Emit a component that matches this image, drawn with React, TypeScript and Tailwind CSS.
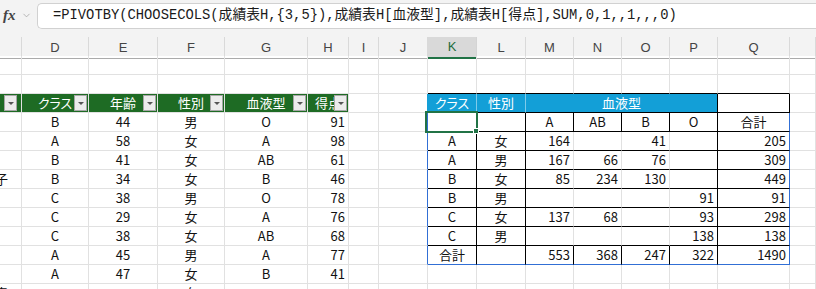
import React from 'react';
import clsx from 'clsx';
import { ChevronDown } from 'lucide-react';

// Spreadsheet columns C..R, widths taken from the screenshot
const GRID =
  'grid grid-cols-[22px_67px_69px_67px_83px_41px_30px_49px_49px_49px_48px_48px_48px_48px_72px_1fr]';

const GR = 'border-r-[#e1e1e1]';
const GB = 'border-b-[#e1e1e1]';
const KR = 'border-r-black';
const KB = 'border-b-black';
const SR = 'border-r-[#316fd5]';
const SB = 'border-b-[#316fd5]';
const CENTER = 'justify-center';
const RIGHT = 'justify-end pr-[3px]';
const GREEN = 'bg-[#1e6b24] text-white border-r-[#1e6b24]';
const BLUE = 'bg-[#139fd7] text-white';

type Spec = {
  t?: React.ReactNode;
  al?: string;
  bg?: string;
  r?: string;
  b?: string;
  span?: string;
  over?: React.ReactNode;
};

function Cell({ s }: { s: Spec }) {
  return (
    <div
      className={clsx(
        'relative flex h-[19px] items-center whitespace-nowrap border-r border-b',
        s.r ?? GR,
        s.b ?? GB,
        s.al ?? CENTER,
        s.bg,
        s.span,
      )}
    >
      {s.t}
      {s.over}
    </div>
  );
}

// little dropdown button of a table header
function FilterBtn({ right = 'right-[1px]' }: { right?: string }) {
  return (
    <span
      className={clsx(
        'absolute top-[1px] z-10 flex h-[16px] w-[13px] items-center justify-center border border-[#a6a6a6] bg-[#ececec]',
        right,
      )}
    >
      <span className="h-0 w-0 border-x-[3px] border-t-[3px] border-x-transparent border-t-[#555]" />
    </span>
  );
}

// active cell outline + fill handle
const Selected = (
  <>
    <span className="pointer-events-none absolute -left-[3px] -top-[2px] z-10 h-[22px] w-[53px] border-2 border-[#217346]" />
    <span className="absolute left-[45px] top-[15px] z-20 h-[6px] w-[6px] border border-white bg-[#217346]" />
  </>
);

type Row6 = [string, string, string, string, string, string];

const left = (name: string, d: string, e: string, f: string, g: string, h: string): Spec[] => [
  { t: name, al: 'justify-end pr-[13px]' },
  { t: d },
  { t: e },
  { t: f },
  { t: g },
  { t: h, al: RIGHT },
];

const blankLeft = (): Spec[] => [{}, {}, {}, {}, {}, {}];

const data: Row6[] = [
  ['', 'B', '44', '男', 'O', '91'],
  ['', 'A', '58', '女', 'A', '98'],
  ['', 'B', '41', '女', 'AB', '61'],
  ['子', 'B', '34', '女', 'B', '46'],
  ['', 'C', '38', '男', 'O', '78'],
  ['', 'C', '29', '女', 'A', '76'],
  ['', 'C', '38', '女', 'AB', '68'],
  ['', 'A', '45', '男', 'A', '77'],
  ['', 'A', '47', '女', 'B', '41'],
];

const pivot = [
  ['A', '女', '164', '', '41', '', '205'],
  ['A', '男', '167', '66', '76', '', '309'],
  ['B', '女', '85', '234', '130', '', '449'],
  ['B', '男', '', '', '', '91', '91'],
  ['C', '女', '137', '68', '', '93', '298'],
  ['C', '男', '', '', '', '138', '138'],
];

const body: Spec[][] = [];

body.push([...blankLeft(), {}, {}, {}, {}, {}, {}, {}, {}, {}, {}]);
// top edge of the pivot table
body.push([...blankLeft(), {}, {}, { b: KB }, { b: KB }, { b: KB }, { b: KB }, { b: KB }, { b: KB }, { b: KB }, {}]);
// table headers
body.push([
  { bg: GREEN, over: <FilterBtn right="right-[4px]" /> },
  { t: 'クラス', bg: GREEN, over: <FilterBtn /> },
  { t: '年齢', bg: GREEN, over: <FilterBtn /> },
  { t: '性別', bg: GREEN, over: <FilterBtn /> },
  { t: '血液型', bg: GREEN, over: <FilterBtn /> },
  { t: '得点', bg: GREEN, al: 'justify-center overflow-hidden', over: <FilterBtn /> },
  {},
  { r: 'border-r-[#139fd7]' },
  { t: 'クラス', bg: BLUE, r: 'border-r-[#7fcbea]', b: KB },
  { t: '性別', bg: BLUE, r: 'border-r-[#7fcbea]', b: KB },
  { t: '血液型', bg: BLUE, r: KR, b: KB, span: 'col-span-4' },
  { r: KR, b: KB },
  {},
]);

// blood type header of the pivot
body.push([
  ...left(...data[0]),
  {},
  { r: SR },
  { r: KR, b: KB, over: Selected },
  { r: KR, b: KB },
  { t: 'A', r: KR, b: KB },
  { t: 'AB', r: KR, b: KB },
  { t: 'B', r: KR, b: KB },
  { t: 'O', r: KR, b: KB },
  { t: '合計', r: SR, b: KB },
  {},
]);

pivot.forEach((p, i) => {
  body.push([
    ...left(...data[i + 1]),
    {},
    { r: SR },
    { t: p[0], r: KR, b: KB },
    { t: p[1], r: KR, b: KB },
    { t: p[2], al: RIGHT, b: KB },
    { t: p[3], al: RIGHT, b: KB },
    { t: p[4], al: RIGHT, b: KB },
    { t: p[5], al: RIGHT, r: KR, b: KB },
    { t: p[6], al: RIGHT, r: SR, b: KB },
    {},
  ]);
});

// totals
body.push([
  ...left(...data[7]),
  {},
  { r: SR },
  { t: '合計', r: KR, b: SB },
  { r: KR, b: SB },
  { t: '553', al: RIGHT, r: KR, b: SB },
  { t: '368', al: RIGHT, r: KR, b: SB },
  { t: '247', al: RIGHT, r: KR, b: SB },
  { t: '322', al: RIGHT, r: KR, b: SB },
  { t: '1490', al: RIGHT, r: SR, b: SB },
  {},
]);

body.push([...left(...data[8]), {}, {}, {}, {}, {}, {}, {}, {}, {}, {}]);
body.push([...left('音', '', '', '女', '', ''), {}, {}, {}, {}, {}, {}, {}, {}, {}, {}]);

const letters = ['', 'D', 'E', 'F', 'G', 'H', 'I', 'J', 'K', 'L', 'M', 'N', 'O', 'P', 'Q', ''];

export default function App() {
  return (
    <div className="h-[289px] w-[816px] overflow-hidden bg-white">
      {/* formula bar */}
      <div className="flex h-[37px] items-start bg-[#f3f3f3]">
        <div className="flex h-[30px] w-[37px] items-center gap-[5px] pl-[3px]">
          <span className="font-['Liberation_Serif',serif] text-[15px] font-bold italic text-[#444]">fx</span>
          <ChevronDown size={11} strokeWidth={1.5} className="text-[#9a9a9a]" />
        </div>
        <div className="mt-[3px] flex h-[26px] flex-1 items-center whitespace-nowrap rounded-l-[5px] border border-r-0 border-[#d1d1d1] bg-white pl-[15px] font-['Liberation_Mono','Noto_Sans_CJK_JP',monospace] text-[13.8px] text-[#1a1a1a]">
          =PIVOTBY(CHOOSECOLS(成績表H,{'{'}3,5{'}'}),成績表H[血液型],成績表H[得点],SUM,0,1,,1,,,0)
        </div>
      </div>

      {/* column headers */}
      <div className={clsx(GRID, "h-[19px] bg-[#f3f3f3] font-['Liberation_Sans',sans-serif] text-[13px] text-[#444]")}>
        {letters.map((l, i) =>
          l === 'K' ? (
            <div
              key={i}
              className="flex items-center justify-center border-r border-b-2 border-r-[#d4d4d4] border-b-[#217346] bg-[#d9d9d9] text-[#1e6b3c]"
            >
              {l}
            </div>
          ) : (
            <div key={i} className="flex items-center justify-center border-r border-b border-r-[#d9d9d9] border-b-[#ababab]">
              {l}
            </div>
          ),
        )}
      </div>

      {/* sheet body */}
      <div className={clsx(GRID, "font-['Noto_Sans_CJK_JP',sans-serif] text-[13px] text-[#111] [font-feature-settings:'palt']")}>
        {body.map((row, r) => row.map((s, c) => <Cell key={`${r}-${c}`} s={s} />))}
      </div>
    </div>
  );
}
